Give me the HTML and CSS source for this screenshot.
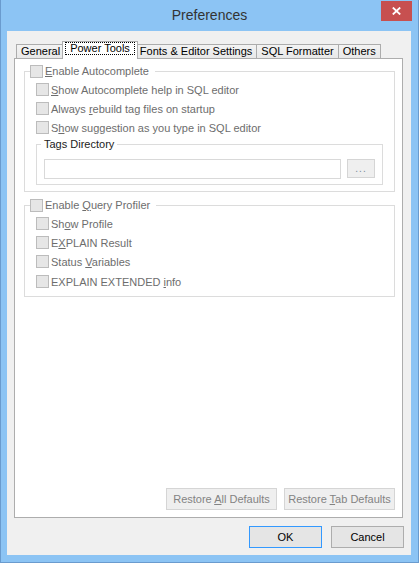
FILE: index.html
```html
<!DOCTYPE html>
<html>
<head>
<meta charset="utf-8">
<title>Preferences</title>
<link rel="stylesheet" href="styles.css">
</head>
<body>
<div class="window">
  <div class="titlebar">
    <span></span>
    <span class="title">Preferences</span>
    <span class="close"><svg width="9" height="8" viewBox="0 0 9 8"><path d="M0.8 0.5 L8.2 7.5 M8.2 0.5 L0.8 7.5" stroke="#fff" stroke-width="1.8" fill="none"/></svg></span>
  </div>
  <div class="client">
    <div class="tabs">
      <div class="tab">General</div>
      <div class="tab active"><span class="focus">Power Tools</span></div>
      <div class="tab">Fonts &amp; Editor Settings</div>
      <div class="tab">SQL Formatter</div>
      <div class="tab">Others</div>
    </div>
    <div class="panel">
      <fieldset class="group g1">
        <legend class="glegend"><span class="check"><span class="box"></span><span class="lbl"><u>E</u>nable Autocomplete</span></span></legend>
        <div class="rows">
          <div class="check row"><span class="box"></span><span class="lbl"><u>S</u>how Autocomplete help in SQL editor</span></div>
          <div class="check row"><span class="box"></span><span class="lbl">Always <u>r</u>ebuild tag files on startup</span></div>
          <div class="check row"><span class="box"></span><span class="lbl">S<u>h</u>ow suggestion as you type in SQL editor</span></div>
          <fieldset class="tags">
            <legend class="tlegend">Tags Directory</legend>
            <div class="pathrow">
              <span class="input"></span>
              <span class="browse">...</span>
            </div>
          </fieldset>
        </div>
      </fieldset>
      <fieldset class="group g2">
        <legend class="glegend"><span class="check"><span class="box"></span><span class="lbl">Enable <u>Q</u>uery Profiler</span></span></legend>
        <div class="rows">
          <div class="check row"><span class="box"></span><span class="lbl">Sh<u>o</u>w Profile</span></div>
          <div class="check row"><span class="box"></span><span class="lbl">E<u>X</u>PLAIN Result</span></div>
          <div class="check row"><span class="box"></span><span class="lbl">Status <u>V</u>ariables</span></div>
          <div class="check row last"><span class="box"></span><span class="lbl">EXPLAIN EXTENDED <u>i</u>nfo</span></div>
        </div>
      </fieldset>
      <div class="panel-actions">
        <button class="btn disabled">Restore <u>A</u>ll Defaults</button>
        <button class="btn disabled">Restore <u>T</u>ab Defaults</button>
      </div>
    </div>
    <div class="footer">
      <button class="btn dlg default">OK</button>
      <button class="btn dlg">Cancel</button>
    </div>
  </div>
</div>
</body>
</html>
```
FILE: styles.css
```css
html, body {
  margin: 0;
  padding: 0;
}
body {
  font-family: "Liberation Sans", Arial, sans-serif;
  font-size: 11px;
  color: #000;
}
.window {
  width: 419px;
  height: 563px;
  box-sizing: border-box;
  background: #8cc4f4;
  border: 1px solid #6a9bce;
  border-top: 0;
  display: flex;
  flex-direction: column;
}
.titlebar {
  height: 31px;
  flex-shrink: 0;
  display: grid;
  grid-template-columns: 1fr auto 1fr;
}
.title {
  font-size: 14px;
  line-height: 31px;
  color: #333;
}
.close {
  justify-self: end;
  align-self: start;
  margin-top: 1px;
  margin-right: 6px;
  width: 31px;
  height: 20px;
  background: #c75050;
  display: flex;
  align-items: center;
  justify-content: center;
}
.client {
  flex: 1;
  margin: 0 7px 7px 6px;
  background: #f0f0f0;
  padding: 10px 8px 7px 7px;
  display: flex;
  flex-direction: column;
  min-height: 0;
}
.tabs {
  height: 17px;
  flex-shrink: 0;
  display: flex;
  align-items: flex-end;
  padding-left: 2px;
}
.tab {
  height: 14px;
  box-sizing: border-box;
  border: 1px solid #acacac;
  border-bottom: 0;
  padding: 0 4px;
  line-height: 13px;
  background: linear-gradient(#f3f3f3, #e8e8e8);
  color: #000;
  white-space: nowrap;
  margin-left: -1px;
}
.tab:first-child {
  margin-left: 0;
}
.tab.active {
  position: relative;
  z-index: 1;
  height: 18px;
  margin: 0 -2px -1px -3px;
  padding: 0 2px;
  background: #fff;
  display: flex;
  align-items: flex-start;
}
.focus {
  border: 1px dotted #000;
  padding: 0 4px;
  line-height: 11px;
  height: 11px;
}
.panel {
  flex: 1;
  background: #fff;
  border: 1px solid #adadad;
  padding: 5px 7px 7px 9px;
  display: flex;
  flex-direction: column;
  min-height: 0;
}
.group {
  margin: 0;
  border: 1px solid #dcdcdc;
  padding: 0 5px 6px 5px;
  min-width: 0;
}
.g2 {
  margin-top: 6px;
}
.glegend {
  padding: 0 6px 0 0;
  height: 14px;
}
.check {
  display: flex;
  align-items: center;
  color: #6d6d6d;
  white-space: nowrap;
}
.glegend .check {
  height: 14px;
}
.box {
  width: 13px;
  height: 13px;
  box-sizing: border-box;
  border: 1px solid #bcbcbc;
  background: #e6e6e6;
  flex-shrink: 0;
}
.lbl {
  margin-left: 2px;
  line-height: 14px;
}
.rows {
  padding-left: 6px;
  padding-top: 2px;
}
.row {
  height: 19px;
}
.g2 .row.last {
  margin-top: 1px;
}
.g2 .rows {
  padding-bottom: 0;
}
.g2 {
  padding-bottom: 5px;
}
.tags {
  margin: 0 6px 0 0;
  border: 1px solid #dcdcdc;
  padding: 0 4px 5px 4px;
  min-width: 0;
}
.tlegend {
  padding: 0 3px;
  height: 14px;
  line-height: 14px;
  color: #222;
}
.pathrow {
  display: flex;
  align-items: flex-start;
  gap: 6px;
  padding: 0 3px;
  margin-top: 8px;
}
.input {
  flex: 1;
  height: 20px;
  box-sizing: border-box;
  border: 1px solid #d9d9d9;
  background: #fff;
}
.browse {
  width: 28px;
  height: 19px;
  box-sizing: border-box;
  border: 1px solid #d5d5d5;
  background: #efefef;
  color: #7a8a9a;
  text-align: center;
  line-height: 17px;
  font-size: 10px;
  letter-spacing: 1px;
}
.panel-actions {
  margin-top: auto;
  display: flex;
  justify-content: flex-end;
  gap: 7px;
}
.btn {
  font-family: inherit;
  font-size: 11px;
  margin: 0;
  padding: 0;
  height: 22px;
  box-sizing: border-box;
  border: 1px solid #adadad;
  background: #e5e5e5;
  color: #000;
  border-radius: 0;
}
.btn.disabled {
  width: 111px;
  border-color: #d5d5d5;
  background: #efefef;
  color: #838383;
}
.footer {
  margin-top: 8px;
  margin-right: -1px;
  display: flex;
  justify-content: flex-end;
  gap: 9px;
  flex-shrink: 0;
}
.btn.dlg {
  width: 73px;
}
.btn.default {
  border-color: #3399ff;
}
```
